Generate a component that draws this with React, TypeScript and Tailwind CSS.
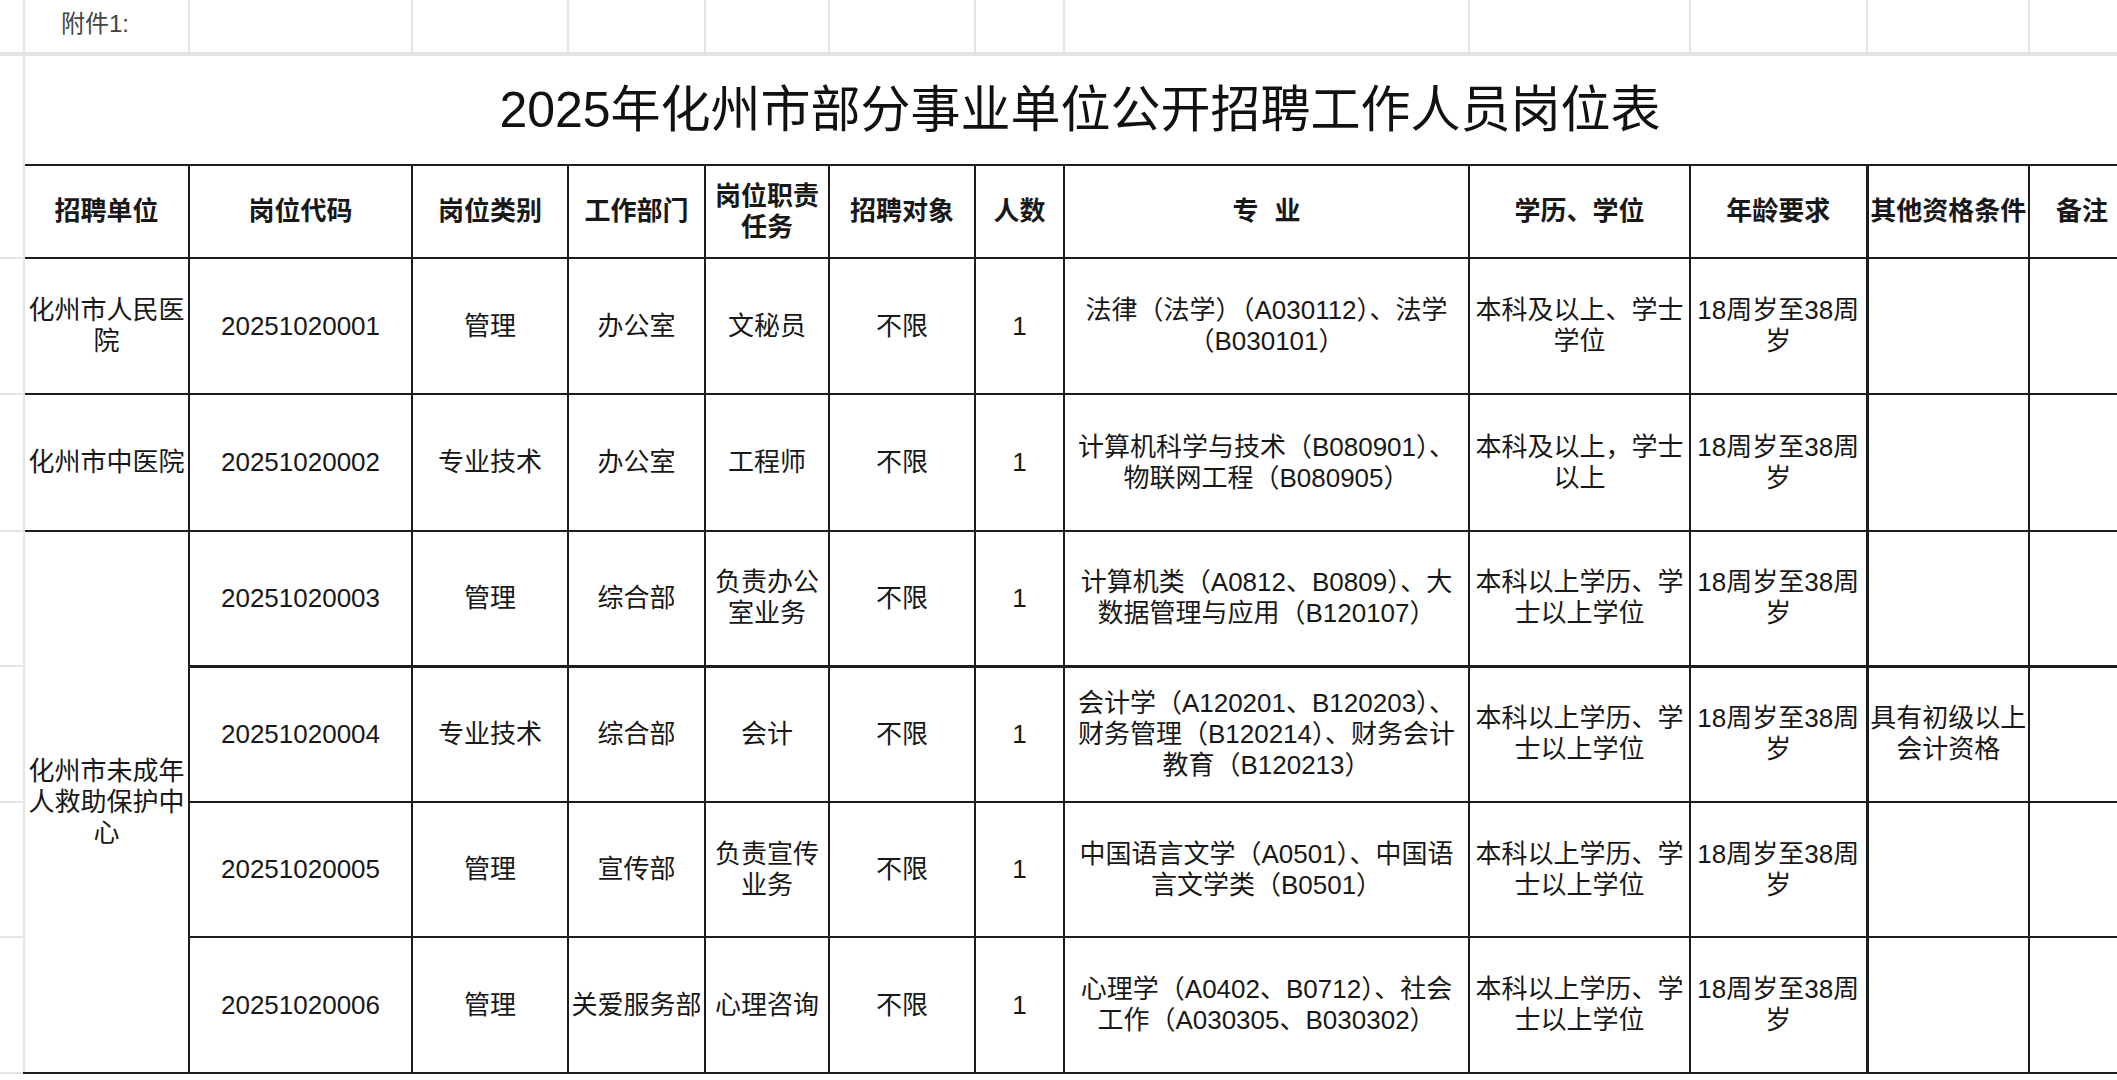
import React from "react"

type Job = {
  code: string
  type: string
  dept: string
  duty: string[]
  major: string[]
  edu: string[]
  other?: string[]
  rowH: string
  thickBottom?: boolean
}

const jobs: Job[] = [
  {
    code: "20251020001",
    type: "管理",
    dept: "办公室",
    duty: ["文秘员"],
    major: ["法律（法学）（A030112）、法学", "（B030101）"],
    edu: ["本科及以上、学士", "学位"],
    rowH: "h-[136px]",
  },
  {
    code: "20251020002",
    type: "专业技术",
    dept: "办公室",
    duty: ["工程师"],
    major: ["计算机科学与技术（B080901）、", "物联网工程（B080905）"],
    edu: ["本科及以上，学士", "以上"],
    rowH: "h-[137px]",
  },
  {
    code: "20251020003",
    type: "管理",
    dept: "综合部",
    duty: ["负责办公", "室业务"],
    major: ["计算机类（A0812、B0809）、大", "数据管理与应用（B120107）"],
    edu: ["本科以上学历、学", "士以上学位"],
    rowH: "h-[135px]",
    thickBottom: true,
  },
  {
    code: "20251020004",
    type: "专业技术",
    dept: "综合部",
    duty: ["会计"],
    major: ["会计学（A120201、B120203）、", "财务管理（B120214）、财务会计", "教育（B120213）"],
    edu: ["本科以上学历、学", "士以上学位"],
    other: ["具有初级以上", "会计资格"],
    rowH: "h-[136px]",
  },
  {
    code: "20251020005",
    type: "管理",
    dept: "宣传部",
    duty: ["负责宣传", "业务"],
    major: ["中国语言文学（A0501）、中国语", "言文学类（B0501）"],
    edu: ["本科以上学历、学", "士以上学位"],
    rowH: "h-[135px]",
  },
  {
    code: "20251020006",
    type: "管理",
    dept: "关爱服务部",
    duty: ["心理咨询"],
    major: ["心理学（A0402、B0712）、社会", "工作（A030305、B030302）"],
    edu: ["本科以上学历、学", "士以上学位"],
    rowH: "h-[136px]",
  },
]

const gutter = "border-r-2 border-b-2 border-[#e3e3e3]"
const cell = "border-2 border-[#1d1d1d] text-center align-middle p-0"

function Lines({ lines }: { lines: string[] }) {
  return (
    <>
      {lines.map((l, i) => (
        <div key={i} className="whitespace-nowrap">
          {l}
        </div>
      ))}
    </>
  )
}

function JobCells({ job }: { job: Job }) {
  const c = `${cell} ${job.thickBottom ? "border-b-[3px]" : ""}`
  return (
    <>
      <td className={c}>{job.code}</td>
      <td className={c}>{job.type}</td>
      <td className={c}>{job.dept}</td>
      <td className={c}>
        <Lines lines={job.duty} />
      </td>
      <td className={c}>不限</td>
      <td className={c}>1</td>
      <td className={c}>
        <Lines lines={job.major} />
      </td>
      <td className={c}>
        <Lines lines={job.edu} />
      </td>
      <td className={c}>
        <Lines lines={["18周岁至38周", "岁"]} />
      </td>
      <td className={`${c} border-l-[3px]`}>{job.other && <Lines lines={job.other} />}</td>
      <td className={c}></td>
    </>
  )
}

export default function App() {
  const topCell = "border-r-2 border-b-4 border-[#e3e3e3]"
  return (
    <div className="w-[2117px] h-[1080px] overflow-hidden bg-white text-[#181818] font-['Liberation_Sans','Noto_Sans_CJK_SC',sans-serif] text-[26px] leading-[31px]">
      <table className="table-fixed border-collapse w-[2135px]">
        <colgroup>
          <col className="w-[24px]" />
          <col className="w-[165px]" />
          <col className="w-[223px]" />
          <col className="w-[156px]" />
          <col className="w-[137px]" />
          <col className="w-[124px]" />
          <col className="w-[146px]" />
          <col className="w-[89px]" />
          <col className="w-[405px]" />
          <col className="w-[221px]" />
          <col className="w-[177px]" />
          <col className="w-[162px]" />
          <col className="w-[106px]" />
        </colgroup>
        <tbody>
          {/* attachment label row */}
          <tr>
            <td className={`${topCell} h-[54px]`} />
            <td className={`${topCell} pl-[36px] pb-[6px] text-[24px] text-[#444] align-middle`}>附件1:</td>
            <td className={topCell} />
            <td className={topCell} />
            <td className={topCell} />
            <td className={topCell} />
            <td className={topCell} />
            <td className={topCell} />
            <td className={topCell} />
            <td className={topCell} />
            <td className={topCell} />
            <td className={topCell} />
            <td className={topCell} />
          </tr>

          {/* title */}
          <tr>
            <td className="border-r-2 border-[#e3e3e3] h-[111px]" />
            <td colSpan={12} className="text-center align-middle text-[50px] leading-none text-[#111]">
              2025年化州市部分事业单位公开招聘工作人员岗位表
            </td>
          </tr>

          {/* header */}
          <tr className="font-bold">
            <td className={`${gutter} h-[93px]`} />
            <td className={`${cell} border-l-0`}>招聘单位</td>
            <td className={cell}>岗位代码</td>
            <td className={cell}>岗位类别</td>
            <td className={cell}>工作部门</td>
            <td className={cell}>
              <div>岗位职责</div>
              <div>任务</div>
            </td>
            <td className={cell}>招聘对象</td>
            <td className={cell}>人数</td>
            <td className={cell}>
              <span className="mr-4">专</span>业
            </td>
            <td className={cell}>学历、学位</td>
            <td className={cell}>年龄要求</td>
            <td className={`${cell} border-l-[3px] whitespace-nowrap`}>其他资格条件</td>
            <td className={cell}>备注</td>
          </tr>

          <tr>
            <td className={`${gutter} ${jobs[0].rowH}`} />
            <td className={`${cell} border-l-0`}>
              <Lines lines={["化州市人民医", "院"]} />
            </td>
            <JobCells job={jobs[0]} />
          </tr>
          <tr>
            <td className={`${gutter} ${jobs[1].rowH}`} />
            <td className={`${cell} border-l-0 whitespace-nowrap`}>化州市中医院</td>
            <JobCells job={jobs[1]} />
          </tr>
          <tr>
            <td className={`${gutter} ${jobs[2].rowH}`} />
            <td rowSpan={4} className={`${cell} border-l-0`}>
              <Lines lines={["化州市未成年", "人救助保护中", "心"]} />
            </td>
            <JobCells job={jobs[2]} />
          </tr>
          {jobs.slice(3).map((job) => (
            <tr key={job.code}>
              <td className={`${gutter} ${job.rowH}`} />
              <JobCells job={job} />
            </tr>
          ))}
        </tbody>
      </table>
    </div>
  )
}
